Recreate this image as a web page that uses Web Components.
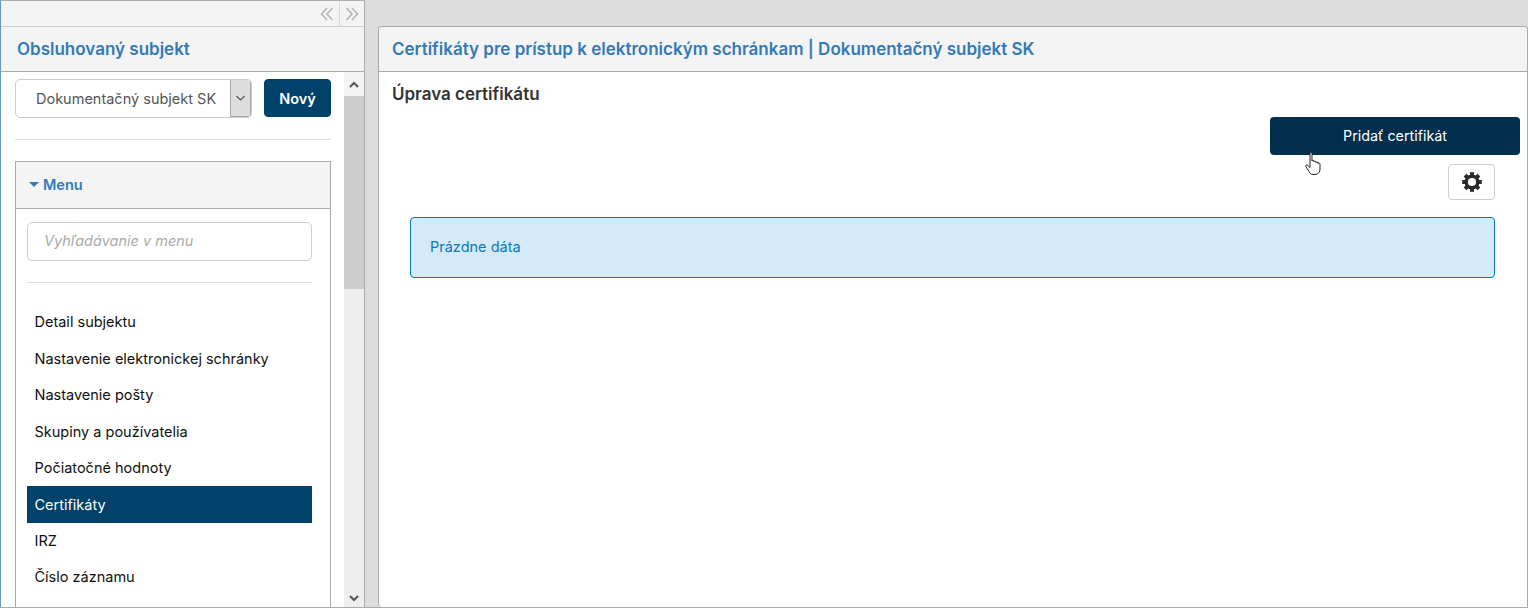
<!DOCTYPE html>
<html lang="sk">
<head>
<meta charset="utf-8">
<title>Certifikáty</title>
<style>
    html, body { margin: 0; height: 100%; overflow: hidden; }
    body { background: #dddddd; font-family: Inter, "Liberation Sans", sans-serif; font-size: 14.5px; color: #333; }
</style>
</head>
<body>
<app-shell>
    <side-pane slot="side" heading="Obsluhovaný subjekt">
        <subject-picker value="Dokumentačný subjekt SK" action="Nový"></subject-picker>
        <menu-box heading="Menu" placeholder="Vyhľadávanie v menu">
            <menu-item>Detail subjektu</menu-item>
            <menu-item>Nastavenie elektronickej schránky</menu-item>
            <menu-item>Nastavenie pošty</menu-item>
            <menu-item>Skupiny a používatelia</menu-item>
            <menu-item>Počiatočné hodnoty</menu-item>
            <menu-item active>Certifikáty</menu-item>
            <menu-item>IRZ</menu-item>
            <menu-item>Číslo záznamu</menu-item>
        </menu-box>
    </side-pane>
    <main-panel heading="Certifikáty pre prístup k elektronickým schránkam | Dokumentačný subjekt SK">
        <cert-page heading="Úprava certifikátu" action="Pridať certifikát" empty="Prázdne dáta"></cert-page>
    </main-panel>
</app-shell>

<script>
// every element gets its own shadow root with its styles
class Base extends HTMLElement {
    render(html) {
        this.attachShadow({ mode: 'open' });
        this.shadowRoot.innerHTML = html;
    }
}

customElements.define('app-shell', class extends Base {
    constructor() {
        super();
        this.render(`
            <style>
                :host {
                    display: flex; align-items: stretch; overflow: hidden;
                    height: 608px; box-sizing: border-box; border-bottom: 1px solid #aaaaaa;
                }
                .gutter { width: 13px; flex: none; }
            </style>
            <slot name="side"></slot>
            <div class="gutter"></div>
            <slot></slot>
        `);
    }
});

customElements.define('side-pane', class extends Base {
    constructor() {
        super();
        this.render(`
            <style>
                :host {
                    display: flex; flex-direction: column; flex: none;
                    width: 365px; height: 607px; box-sizing: border-box;
                    background: #fff; overflow: hidden;
                    border-top: 1px solid #a9b1b8;
                    border-left: 1px solid #6a98c4;
                    border-right: 1px solid #aaaaaa;
                }
                .tools {
                    height: 25px; flex: none; display: flex; justify-content: flex-end;
                    background: #f4f4f4; border-bottom: 1px solid #cccccc;
                }
                .tools div { width: 24px; display: flex; align-items: center; justify-content: center; }
                .tools div + div { border-left: 1px solid #d9d9d9; }
                .head {
                    height: 44px; flex: none; display: flex; align-items: center; padding-left: 16px;
                    background: #f4f4f4; border-bottom: 1px solid #aaaaaa;
                    color: #337ab7; font-weight: 600; font-size: 17px;
                }
                .body { flex: 1; display: flex; min-height: 0; }
                .content { flex: 1; min-width: 0; padding: 7px 13px 0 14px; overflow: hidden; }
                .bar { width: 20px; flex: none; background: #eeeeee; display: flex; flex-direction: column; }
                .arrow { height: 24px; flex: none; display: flex; align-items: center; justify-content: center; background: #f4f4f4; }
                .arrow.down { margin-top: auto; background: #eeeeee; height: 22px; align-items: flex-end; padding-bottom: 5px; box-sizing: border-box; }
                .thumb { height: 193px; flex: none; background: #cdcdcd; }
                svg { display: block; }
            </style>
            <div class="tools">
                <div><svg width="14" height="14" viewBox="0 0 14 14" fill="none" stroke="#b5b5b5" stroke-width="1.6"><path d="M7 1L1.500 7 7 13M12.500 1L7 7l5.500 6"/></svg></div>
                <div><svg width="14" height="14" viewBox="0 0 14 14" fill="none" stroke="#b5b5b5" stroke-width="1.6"><path d="M1.500 1L7 7l-5.500 6M7 1l5.500 6L7 13"/></svg></div>
            </div>
            <div class="head">${this.getAttribute('heading')}</div>
            <div class="body">
                <div class="content"><slot></slot></div>
                <div class="bar">
                    <div class="arrow"><svg width="10" height="7" viewBox="0 0 10 7" fill="none" stroke="#555" stroke-width="2"><path d="M1 6l4-4 4 4"/></svg></div>
                    <div class="thumb"></div>
                    <div class="arrow down"><svg width="10" height="7" viewBox="0 0 10 7" fill="none" stroke="#555" stroke-width="2"><path d="M1 1l4 4 4-4"/></svg></div>
                </div>
            </div>
        `);
    }
});

customElements.define('subject-picker', class extends Base {
    constructor() {
        super();
        this.render(`
            <style>
                :host {
                    display: flex; justify-content: space-between; align-items: flex-start;
                    padding-bottom: 21px; border-bottom: 1px solid #dddddd; margin-bottom: 21px;
                }
                .select {
                    width: 237px; height: 39px; box-sizing: border-box; display: flex;
                    border: 1px solid #cccccc; border-radius: 5px; overflow: hidden;
                    color: #555555; font-size: 14.500px;
                }
                .value { flex: 1; display: flex; align-items: center; padding-left: 20px; }
                .caret {
                    width: 21px; display: flex; align-items: center; justify-content: center;
                    background: #dddddd; border-left: 1px solid #aaaaaa; border-right: 1px solid #aaaaaa; border-bottom: 1px solid #aaaaaa;
                    box-sizing: border-box;
                }
                button {
                    width: 67px; height: 38px; padding: 0; border: 1px solid #01426a; border-radius: 4px;
                    background: #01426a; color: #fff; font: 600 14.500px Inter, "Liberation Sans", sans-serif;
                }
            </style>
            <div class="select">
                <div class="value">${this.getAttribute('value')}</div>
                <div class="caret"><svg width="9" height="6" viewBox="0 0 9 6" fill="none" stroke="#555" stroke-width="1.100"><path d="M.5 1l4 4 4-4"/></svg></div>
            </div>
            <button>${this.getAttribute('action')}</button>
        `);
    }
});

customElements.define('menu-box', class extends Base {
    constructor() {
        super();
        this.render(`
            <style>
                :host { display: block; border: 1px solid #aaaaaa; }
                .head {
                    height: 46px; box-sizing: border-box; padding: 0 0 2px 13px; display: flex; align-items: center; gap: 4px;
                    background: #f4f4f4; border-bottom: 0; box-shadow: 0 1px 0 #aaaaaa; margin-bottom: 1px;
                    color: #337ab7; font-weight: 600; font-size: 14.500px;
                }
                .tri { width: 0; height: 0; border: 5.500px solid transparent; border-top: 5px solid #337ab7; border-bottom: 0; }
                .body { padding: 13px 18px 40px 11px; }
                input {
                    display: block; width: 100%; height: 39px; box-sizing: border-box; padding: 0 16px 2px;
                    border: 1px solid #cccccc; border-radius: 5px; outline: none;
                    font: italic 14.500px Inter, "Liberation Sans", sans-serif;
                }
                input::placeholder { color: #aaaaaa; opacity: 1; }
                hr { height: 1px; margin: 21px 0 21.200px; border: 0; background: #dddddd; }
            </style>
            <div class="head"><span class="tri"></span>${this.getAttribute('heading')}</div>
            <div class="body">
                <input placeholder="${this.getAttribute('placeholder')}">
                <hr>
                <slot></slot>
            </div>
        `);
    }
});

customElements.define('menu-item', class extends Base {
    constructor() {
        super();
        this.render(`
            <style>
                :host {
                    display: flex; align-items: center; height: 36.430px; box-sizing: border-box;
                    padding: 0 0 1px 7.500px; color: #111111; font-size: 14.500px;
                }
                :host([active]) { background: #01426a; color: #fff; }
            </style>
            <slot></slot>
        `);
    }
});

customElements.define('main-panel', class extends Base {
    constructor() {
        super();
        this.render(`
            <style>
                :host {
                    display: flex; flex-direction: column; flex: 1; min-width: 0;
                    margin: 26px 0 0; background: #fff; box-sizing: border-box;
                    border: 1px solid #aaaaaa; border-bottom: 0; border-radius: 4px 4px 0 4px;
                }
                .head {
                    height: 44px; flex: none; display: flex; align-items: center; padding-left: 13px;
                    background: #f4f4f4; border-bottom: 1px solid #aaaaaa; border-radius: 4px 4px 0 0;
                    color: #337ab7; font-weight: 600; font-size: 17px;
                }
            </style>
            <div class="head">${this.getAttribute('heading')}</div>
            <slot></slot>
        `);
    }
});

customElements.define('cert-page', class extends Base {
    constructor() {
        super();
        const teeth = [0, 45, 90, 135, 180, 225, 270, 315]
            .map((a) => `<rect x="8" y="0.200" width="4" height="5" transform="rotate(${a} 10 10)"/>`)
            .join('');
        this.render(`
            <style>
                :host { display: block; position: relative; padding: 12px 7px 0 13px; }
                h2 { margin: 0; font-size: 17px; font-weight: 600; line-height: 21px; color: #333; }
                .actions { display: flex; flex-direction: column; align-items: flex-end; gap: 9px; margin-top: 12px; }
                .add {
                    width: 250px; height: 38px; padding: 0 0 2px; border: 0; border-radius: 4px;
                    background: #012f4d; color: #fff; font: 14.300px Inter, "Liberation Sans", sans-serif;
                }
                .gear {
                    width: 47px; height: 36px; margin-right: 25px; padding: 0; display: flex;
                    align-items: center; justify-content: center; box-sizing: border-box;
                    background: #fff; border: 1px solid #cccccc; border-radius: 4px;
                }
                .alert {
                    height: 61px; box-sizing: border-box; margin: 17px 25px 0 18px; padding: 0 0 2px 19px;
                    display: flex; align-items: center;
                    background: #d4eaf8; border: 1px solid #0a79b6; border-radius: 4px;
                    color: #0a79b6; font-size: 14.500px;
                }
                .cursor { position: absolute; left: 926px; top: 80px; }
                svg { display: block; }
            </style>
            <h2>${this.getAttribute('heading')}</h2>
            <div class="actions">
                <button class="add">${this.getAttribute('action')}</button>
                <button class="gear">
                    <svg width="20" height="20" viewBox="0 0 20 20" fill="#2b2b2b">
                        ${teeth}
                        <circle cx="10" cy="10" r="5.800" fill="none" stroke="#2b2b2b" stroke-width="3.400"/>
                    </svg>
                </button>
            </div>
            <div class="alert">${this.getAttribute('empty')}</div>
            <svg class="cursor" width="18" height="24" viewBox="0 0 18 24" fill="#fff" stroke="#222" stroke-width="1" stroke-linejoin="round">
                <path d="M5 1.500c0-1.300 2-1.300 2 0V9c0-1 2-1 2 0v1c0-1 2-1 2 0v.6c0-1 2-1 2 0v1c0-1 2-.8 2 .4v5c0 3-2 5.500-5 5.500H8c-2 0-3-1-4-3L.8 14.500c-.7-1.200.8-2.200 1.700-1.200L5 15.500z"/>
            </svg>
        `);
    }
});
</script>
</body>
</html>
